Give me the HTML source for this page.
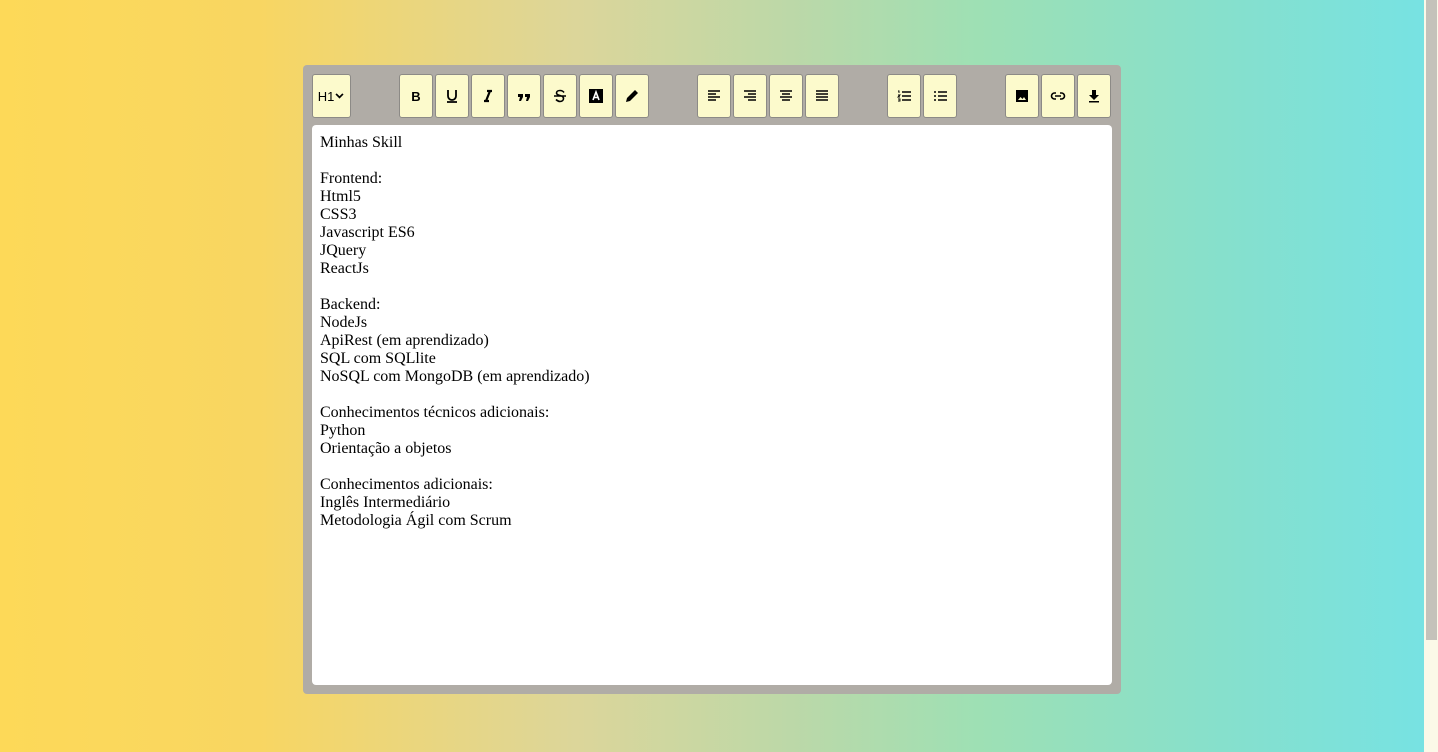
<!DOCTYPE html><html><head><style>
body{margin:0;width:1438px;height:752px;overflow:hidden;background:linear-gradient(to right,#fdd958 0%,#f8d662 18%,#dcd69a 40%,#bcd8a8 55%,#9ee0b4 68%,#86e0cc 85%,#76e2e4 100%);font-family:"Liberation Sans",sans-serif;position:relative}
.sb{position:absolute;left:1424px;top:0;width:14px;height:752px;background:#fbf9e8}
.th{position:absolute;left:1426px;top:0;width:11px;height:640px;background:#c4c2ba}
.ed{position:absolute;left:303px;top:65px;width:818px;height:629px;background:#b0aca6;border-radius:4px}
.b{position:absolute;top:9px;box-sizing:border-box;width:34px;height:44px;background:#fcfacc;border:1px solid #8c8a86;border-radius:3px;display:flex;align-items:center;justify-content:center}
.b svg{width:16px;height:16px}
.ta{position:absolute;left:9px;top:60px;width:800px;height:560px;background:#fff;border-radius:4px;font-family:"Liberation Serif",serif;font-size:16px;line-height:18px;padding:9px 8px;box-sizing:border-box;color:#000}
</style></head><body>
<div class="sb"></div><div class="th"></div>
<div class="ed">
<div class="b" style="left:9px;width:39px;font-size:13px">H1<svg viewBox="0 0 16 16" style="width:11px"><path d="M3 5l5 5 5-5" stroke="#000" stroke-width="2.5" fill="none"/></svg></div>
<div class="b" style="left:96px"><b style="font-size:13px">B</b></div>
<div class="b" style="left:132px"><svg viewBox="0 0 16 16"><path d="M4 2v6a4 4 0 008 0V2M3 14h10" stroke="#000" stroke-width="1.8" fill="none"/></svg></div>
<div class="b" style="left:168px"><svg viewBox="0 0 16 16"><path d="M7 3h5M4 13h5M10 3L6 13" stroke="#000" stroke-width="2.2" fill="none"/></svg></div>
<div class="b" style="left:204px"><svg viewBox="0 0 16 16"><path d="M2 6h5v3l-2 4H3l1-4H2zM9 6h5v3l-2 4h-2l1-4H9z"/></svg></div>
<div class="b" style="left:240px"><svg viewBox="0 0 16 16"><path d="M12 4.5C11 3 10 2.5 8 2.5S4.5 3.5 4.5 5 6 7 8 7.5s3.5 1.2 3.5 3S10 13.5 8 13.5 5 12.5 4 11.5M2 8h12" stroke="#000" stroke-width="1.6" fill="none"/></svg></div>
<div class="b" style="left:276px"><svg viewBox="0 0 16 16"><rect x="1" y="1" width="14" height="14"/><path d="M5 12l3-8 3 8M6 9.5h4" stroke="#fff" stroke-width="1.6" fill="none"/></svg></div>
<div class="b" style="left:312px"><svg viewBox="0 0 16 16"><path d="M2 14l1-4 8-8 3 3-8 8z"/></svg></div>
<div class="b" style="left:394px"><svg viewBox="0 0 16 16"><path d="M2 3h12M2 6h8M2 9h12M2 12h8" stroke="#000" stroke-width="1.5"/></svg></div>
<div class="b" style="left:430px"><svg viewBox="0 0 16 16"><path d="M2 3h12M6 6h8M2 9h12M6 12h8" stroke="#000" stroke-width="1.5"/></svg></div>
<div class="b" style="left:466px"><svg viewBox="0 0 16 16"><path d="M2 3h12M4 6h8M2 9h12M4 12h8" stroke="#000" stroke-width="1.5"/></svg></div>
<div class="b" style="left:502px"><svg viewBox="0 0 16 16"><path d="M2 3h12M2 6h12M2 9h12M2 12h12" stroke="#000" stroke-width="1.5"/></svg></div>
<div class="b" style="left:584px"><svg viewBox="0 0 16 16"><path d="M6 4h9M6 8h9M6 12h9" stroke="#000" stroke-width="1.5"/><path d="M2 3h1v2M2 7h2l-2 2h2M2 11h2v2H2" stroke="#000" stroke-width=".9" fill="none"/></svg></div>
<div class="b" style="left:620px"><svg viewBox="0 0 16 16"><path d="M6 4h9M6 8h9M6 12h9M2 4h2M2 8h2M2 12h2" stroke="#000" stroke-width="1.5"/></svg></div>
<div class="b" style="left:702px"><svg viewBox="0 0 16 16"><rect x="2" y="2" width="12" height="12"/><path d="M4 12l2.5-3 2 2 1.5-2 2 3z" fill="#fcfacc"/></svg></div>
<div class="b" style="left:738px"><svg viewBox="0 0 16 16"><path d="M6 5H4.5a3 3 0 000 6H6M10 5h1.5a3 3 0 010 6H10M5 8h6" stroke="#000" stroke-width="1.6" fill="none"/></svg></div>
<div class="b" style="left:774px"><svg viewBox="0 0 16 16"><path d="M6 2h4v5h3l-5 5-5-5h3zM3 13h10v1.5H3z"/></svg></div>
<div class="ta">Minhas Skill<br><br>Frontend:<br>Html5<br>CSS3<br>Javascript ES6<br>JQuery<br>ReactJs<br><br>Backend:<br>NodeJs<br>ApiRest (em aprendizado)<br>SQL com SQLlite<br>NoSQL com MongoDB (em aprendizado)<br><br>Conhecimentos técnicos adicionais:<br>Python<br>Orientação a objetos<br><br>Conhecimentos adicionais:<br>Inglês Intermediário<br>Metodologia Ágil com Scrum</div>
</div>
</body></html>
